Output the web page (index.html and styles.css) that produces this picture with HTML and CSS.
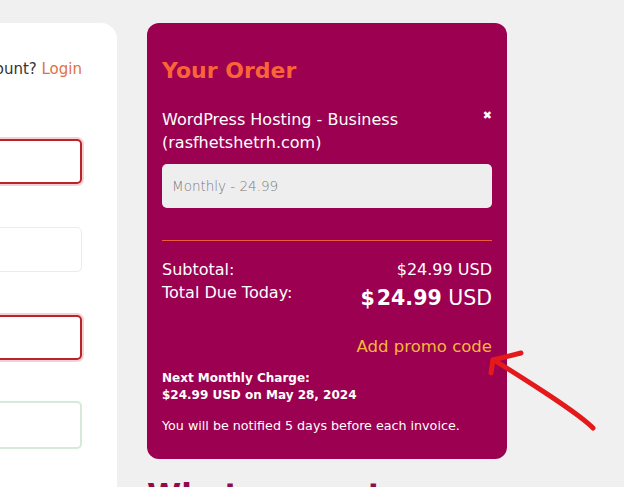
FILE: index.html
```html
<!DOCTYPE html>
<html>
<head>
    <title>Checkout</title>
    <link rel="stylesheet" href="styles.css">
</head>
<body>
    <div id="page">
        <div id="account">
            <p class="login-line">Already have an account? <a href="#">Login</a></p>
            <input class="field error first" type="text">
            <input class="field" type="text">
            <input class="field error" type="text">
            <input class="field valid" type="text">
        </div>

        <div id="side">
            <div id="order">
                <h2>Your Order</h2>
                <div class="product">
                    <span class="product-name">WordPress Hosting - Business (rasfhetshetrh.com)</span>
                    <span class="remove">&#10006;</span>
                </div>
                <div class="cycle">Monthly - 24.99</div>
                <div class="divider"></div>
                <div class="line subtotal">
                    <span>Subtotal:</span>
                    <span>$24.99 USD</span>
                </div>
                <div class="line total">
                    <span>Total Due Today:</span>
                    <span class="big"><b>$&#8202;24.99</b> USD</span>
                </div>
                <div class="promo"><a href="#">Add promo code</a></div>
                <p class="next"><b>Next Monthly Charge:<br>$24.99 USD on May 28, 2024</b></p>
                <p class="notice">You will be notified 5 days before each invoice.</p>
            </div>
            <h1>What you get</h1>
        </div>
    </div>

    <!-- hand drawn arrow pointing at the promo link -->
    <svg id="arrow" width="140" height="90" viewBox="0 0 140 90">
        <path d="M112 80 C98 66 64 44 16 14" fill="none" stroke="#e3191c" stroke-width="5" stroke-linecap="round"/>
        <path d="M12 12 L40 5" fill="none" stroke="#e3191c" stroke-width="5" stroke-linecap="round"/>
        <path d="M12 12 L10 25" fill="none" stroke="#e3191c" stroke-width="5" stroke-linecap="round"/>
    </svg>
</body>
</html>
```

FILE: styles.css
```css
body {
    margin: 0;
    font-family: "DejaVu Sans", sans-serif;
    background-color: #f1f0f0;
    overflow: hidden;
    position: relative;
    height: 487px;
}

#page {
    display: flex;
    align-items: flex-start;
    padding-top: 23px;
}

#account {
    width: 405px;
    margin-left: -288px;
    padding: 36px 35px 0 35px;
    background-color: #fff;
    border-radius: 0 16px 0 0;
    height: 464px;
    box-sizing: border-box;
}

.login-line {
    margin: 0;
    text-align: right;
    font-size: 15px;
    line-height: 20px;
    color: #333;
    white-space: nowrap;
}

.login-line a {
    color: #e2703f;
    text-decoration: none;
}

.field {
    display: block;
    width: 100%;
    height: 45px;
    box-sizing: border-box;
    border: 1px solid #ececec;
    border-radius: 5px;
    background: #fff;
    margin: 43px 0 0 0;
}

.field.first {
    margin-top: 60px;
}

.field.error {
    border: 2px solid #b8232c;
    box-shadow: 0 0 0 2px #f9d0d2;
}

.field.valid {
    height: 48px;
    border: 2px solid #d6e9da;
    margin-top: 41px;
}

#side {
    margin-left: 30px;
    width: 360px;
}

#order {
    background-color: #9b0150;
    color: #fff;
    border-radius: 12px;
    padding: 33px 15px 0 15px;
    height: 436px;
    box-sizing: border-box;
}

#order h2 {
    margin: 0;
    font-size: 22px;
    color: #fa6437;
    font-weight: bold;
    line-height: 30px;
}

.product {
    display: flex;
    justify-content: space-between;
    margin-top: 22px;
}

.product-name {
    font-size: 16px;
    line-height: 23px;
    width: 280px;
}

.remove {
    font-size: 11px;
    margin-top: 1px;
}

.cycle {
    margin-top: 10px;
    background-color: #efeeee;
    color: #7a7a7a;
    font-size: 13.5px;
    border-radius: 5px;
    height: 44px;
    line-height: 44px;
    padding-left: 10px;
    font-weight: 300;
}

.divider {
    height: 1px;
    background-color: #ef5a3c;
    margin-top: 32px;
}

.line {
    display: flex;
    justify-content: space-between;
    font-size: 16px;
    line-height: 22px;
}

.line.subtotal {
    margin-top: 18px;
}

.line.total {
    align-items: flex-start;
    margin-top: 1px;
}

.big {
    font-size: 20.5px;
    line-height: 26px;
    margin-top: 3px;
}

.promo {
    text-align: right;
    margin-top: 25px;
    font-size: 16.5px;
    line-height: 22px;
}

.promo a {
    color: #f6b73c;
    text-decoration: none;
}

.next {
    font-size: 12px;
    line-height: 17px;
    margin: 12px 0 0 0;
}

.notice {
    font-size: 12.7px;
    line-height: 17px;
    margin: 13px 0 0 0;
}

#side h1 {
    margin: 17px 0 0 0;
    font-size: 31px;
    color: #8f0c4c;
    font-weight: 600;
}

#arrow {
    position: absolute;
    left: 481px;
    top: 348px;
}
```
